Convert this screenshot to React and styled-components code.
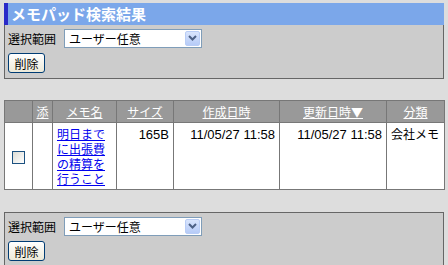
import React from "react"
import styled, { createGlobalStyle } from "styled-components"

const GlobalStyle = createGlobalStyle`
  html, body {
    margin: 0;
    padding: 0;
    background: #dddddd;
    font-family: "Noto Sans CJK JP", "Liberation Sans", sans-serif;
    font-size: 12px;
    color: #000;
  }
`

const Page = styled.div`
  padding: 3px 4px 0 4px;
  width: 440px;
`

const Title = styled.h1`
  margin: 0;
  height: 22px;
  line-height: 22px;
  background: #7ba7ea;
  border-left: 4px solid #2a2ac8;
  padding-left: 3px;
  color: #fff;
  font-size: 15px;
  font-weight: bold;
`

const Panel = styled.div`
  background: #cccccc;
  border: 1px solid #666666;
  border-top: ${(p) => (p.$noTop ? "none" : "1px solid #666666")};
  padding: 3px 3px 5px 3px;
  display: flex;
  flex-direction: column;
  gap: 5px;
`

const Row = styled.div`
  display: flex;
  align-items: center;
  gap: 8px;
  height: 20px;
`

const Label = styled.span`
  font-size: 12px;
`

const SelectBox = styled.div`
  display: flex;
  align-items: center;
  width: 135px;
  height: 17px;
  border: 1px solid #7f9db9;
  background: #fff;
  padding-right: 1px;
`

const SelectText = styled.span`
  flex: 1;
  padding-left: 4px;
  font-size: 12px;
`

const Arrow = styled.span`
  width: 15px;
  height: 15px;
  border-radius: 2px;
  background: linear-gradient(#d9e5fd, #b6cbf7);
  border: 1px solid #b9cdf6;
  box-sizing: border-box;
  display: flex;
  align-items: center;
  justify-content: center;
`

const Button = styled.button`
  width: 37px;
  height: 20px;
  padding: 0;
  font-family: inherit;
  font-size: 12px;
  border: 1px solid #003c74;
  border-radius: 3px;
  background: linear-gradient(#ffffff, #ece9d8);
  color: #000;
`

const Table = styled.table`
  margin: 21px 0 22px 0;
  width: 440px;
  border-collapse: collapse;
  table-layout: fixed;
  background: #fff;

  th, td {
    border: 1px solid #777777;
    padding: 0;
  }
`

const Th = styled.th`
  background: #999999;
  height: 21px;
  font-weight: normal;
  font-size: 12px;
  color: #fff;
  text-align: center;

  a {
    color: #fff;
    text-decoration: underline;
  }
`

const Td = styled.td`
  vertical-align: ${(p) => (p.$middle ? "middle" : "top")};
  text-align: ${(p) => p.$align || "left"};
  padding: 3px 4px !important;
  font-size: 12px;
  line-height: 15px;
  height: 56px;

  a {
    color: #0000ee;
    text-decoration: underline;
  }
`

const Num = styled.span`
  font-family: "Liberation Sans", sans-serif;
  font-size: 13px;
`

const Check = styled.span`
  display: inline-block;
  width: 11px;
  height: 11px;
  border: 1px solid #1c5180;
  background: linear-gradient(135deg, #dcdcd5, #ffffff);
  vertical-align: middle;
`

const Controls = ({ noTop }) => (
  <Panel $noTop={noTop}>
    <Row>
      <Label>選択範囲</Label>
      <SelectBox>
        <SelectText>ユーザー任意</SelectText>
        <Arrow>
          <svg width="9" height="6" viewBox="0 0 9 6">
            <path d="M1 1 L4.5 4.5 L8 1" stroke="#4d6185" strokeWidth="2" fill="none" />
          </svg>
        </Arrow>
      </SelectBox>
    </Row>
    <Row>
      <Button>削除</Button>
    </Row>
  </Panel>
)

const App = () => {
  return (
    <Page>
      <GlobalStyle />
      <Title>メモパッド検索結果</Title>
      <Controls noTop />
      <Table>
        <colgroup>
          <col style={{ width: 28 }} />
          <col style={{ width: 20 }} />
          <col style={{ width: 64 }} />
          <col style={{ width: 57 }} />
          <col style={{ width: 106 }} />
          <col style={{ width: 107 }} />
          <col style={{ width: 58 }} />
        </colgroup>
        <thead>
          <tr>
            <Th></Th>
            <Th><a>添</a></Th>
            <Th><a>メモ名</a></Th>
            <Th><a>サイズ</a></Th>
            <Th><a>作成日時</a></Th>
            <Th><a>更新日時▼</a></Th>
            <Th><a>分類</a></Th>
          </tr>
        </thead>
        <tbody>
          <tr>
            <Td $middle $align="center"><Check /></Td>
            <Td></Td>
            <Td><a>明日までに出張費の精算を行うこと</a></Td>
            <Td $align="right"><Num>165B</Num></Td>
            <Td $align="right"><Num>11/05/27 11:58</Num></Td>
            <Td $align="right"><Num>11/05/27 11:58</Num></Td>
            <Td>会社メモ</Td>
          </tr>
        </tbody>
      </Table>
      <Controls />
    </Page>
  )
}

export default App
